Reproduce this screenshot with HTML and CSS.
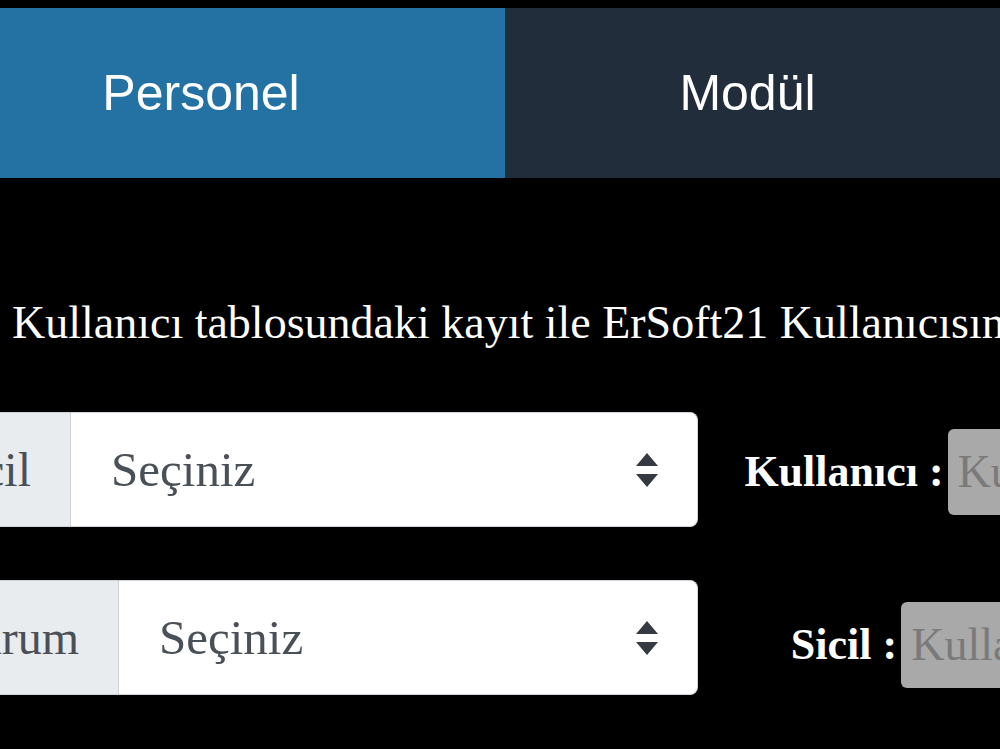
FILE: index.html
```html
<!DOCTYPE html>
<html lang="tr">
<head>
  <meta charset="UTF-8">
  <title>Kullanıcı Eşleştirme</title>
  <link rel="stylesheet" href="styles.css">
</head>
<body>
  <nav class="tabs">
    <a class="tab tab-active" href="#">Personel</a>
    <a class="tab tab-dark" href="#">Modül</a>
  </nav>

  <p class="intro">Kullanıcı tablosundaki kayıt ile ErSoft21 Kullanıcısını eşleştiriniz</p>

  <div class="form-row">
    <div class="input-group">
      <span class="addon">Sicil</span>
      <div class="select-wrap">
        <select class="custom-select">
          <option>Seçiniz</option>
        </select>
        <svg class="arrows" width="22" height="34" viewBox="0 0 22 34">
          <path d="M11 0 L22 13 L0 13 Z" fill="#343a40"/>
          <path d="M0 21 L22 21 L11 34 Z" fill="#343a40"/>
        </svg>
      </div>
    </div>
    <div class="side side-first">
      <label class="side-label">Kullanıcı :</label><input class="side-input" type="text" placeholder="Kullanıcı" disabled>
    </div>
  </div>

  <div class="form-row">
    <div class="input-group">
      <span class="addon">Durum</span>
      <div class="select-wrap">
        <select class="custom-select">
          <option>Seçiniz</option>
        </select>
        <svg class="arrows" width="22" height="34" viewBox="0 0 22 34">
          <path d="M11 0 L22 13 L0 13 Z" fill="#343a40"/>
          <path d="M0 21 L22 21 L11 34 Z" fill="#343a40"/>
        </svg>
      </div>
    </div>
    <div class="side side-second">
      <label class="side-label">Sicil :</label><input class="side-input" type="text" placeholder="Kullanıcı" disabled>
    </div>
  </div>
</body>
</html>
```

FILE: styles.css
```css
html, body {
  overflow: hidden;
}
body {
  margin: 0;
  padding-top: 8px;
  background-color: #000;
  color: #fff;
  font-family: "Liberation Serif", "Times New Roman", serif;
  font-size: 44px;
}
.tabs {
  display: flex;
  height: 170px;
}
.tab {
  display: flex;
  align-items: center;
  justify-content: center;
  color: #fff;
  text-decoration: none;
  font-family: "Liberation Sans", Arial, sans-serif;
  font-size: 50px;
}
.tab-active {
  width: 505px;
  padding-right: 103px;
  box-sizing: border-box;
  background-color: #2471a3;
}
.tab-dark {
  flex: 1;
  padding-right: 10px;
  background-color: #212d3a;
}
.intro {
  margin: 120px 0 0 12px;
  white-space: nowrap;
  font-size: 46px;
  line-height: 50px;
}
.form-row {
  display: flex;
  align-items: center;
  margin-left: -95px;
  width: 1389px;
}
.form-row + .form-row {
  margin-top: 53px;
}
.intro + .form-row {
  margin-top: 64px;
}
.input-group {
  display: flex;
  width: 793px;
  height: 115px;
  flex-shrink: 0;
}
.addon {
  display: flex;
  align-items: center;
  padding: 0 39px 0 37px;
  background-color: #e9ecef;
  color: #495057;
  font-size: 48px;
  border: 1px solid #ced4da;
  border-radius: 8px 0 0 8px;
}
.select-wrap {
  position: relative;
  flex: 1;
}
.custom-select {
  appearance: none;
  -webkit-appearance: none;
  width: 100%;
  height: 115px;
  padding: 0 40px;
  margin: 0;
  background-color: #fff;
  color: #495057;
  font-family: "Liberation Serif", "Times New Roman", serif;
  font-size: 49px;
  border: 1px solid #ced4da;
  border-left: none;
  border-radius: 0 8px 8px 0;
  box-sizing: border-box;
}
.arrows {
  position: absolute;
  right: 40px;
  top: 41px;
  pointer-events: none;
}
.side {
  width: 596px;
  flex-shrink: 0;
  display: flex;
  justify-content: center;
  align-items: center;
}
.side-first {
  margin-top: 4px;
}
.side-second {
  margin-top: 14px;
}
.side-label {
  font-weight: bold;
  margin-right: 4px;
}
.side-input {
  width: 300px;
  height: 86px;
  padding: 0 10px;
  background-color: #a9a9a9;
  border: none;
  border-radius: 6px;
  font-family: "Liberation Serif", "Times New Roman", serif;
  font-size: 46px;
  box-sizing: border-box;
}
.side-input::placeholder {
  color: #7a7a7a;
}
```
